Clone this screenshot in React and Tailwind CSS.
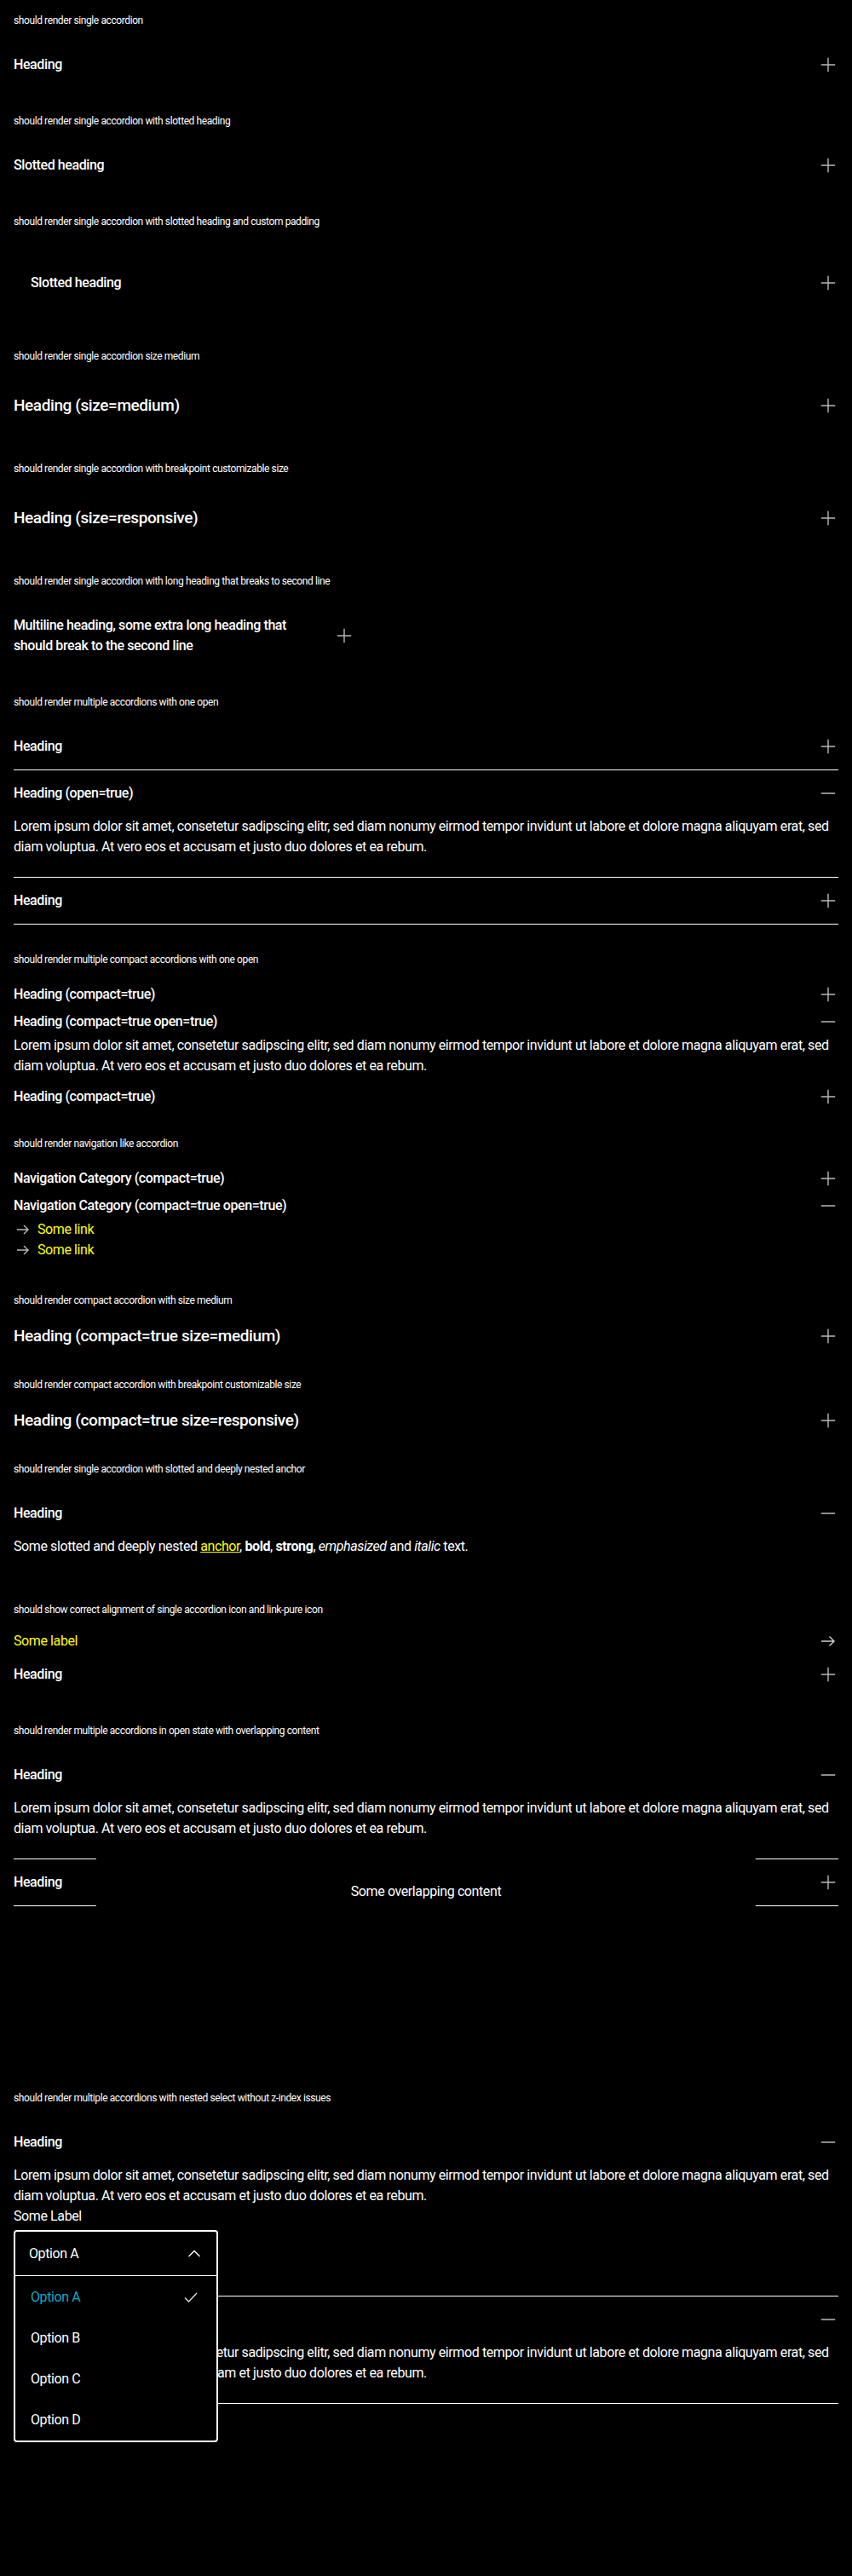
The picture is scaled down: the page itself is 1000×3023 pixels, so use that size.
import React from 'react'

const lorem =
    'Lorem ipsum dolor sit amet, consetetur sadipscing elitr, sed diam nonumy eirmod tempor invidunt ut labore et dolore magna aliquyam erat, sed diam voluptua. At vero eos et accusam et justo duo dolores et ea rebum.'

const Icon = ({ children, className = '' }) => (
    <svg
        viewBox="0 0 24 24"
        width="24"
        height="24"
        fill="none"
        stroke="currentColor"
        strokeWidth="1.4"
        strokeLinecap="square"
        className={`shrink-0 ${className}`}
    >
        {children}
    </svg>
)

const Plus = () => (
    <Icon className="text-[#b8b8b8]">
        <path d="M12 4.5v15M4.5 12h15" />
    </Icon>
)

const Minus = () => (
    <Icon className="text-[#c8c8c8]">
        <path d="M4.5 12h15" />
    </Icon>
)

const ArrowRight = () => (
    <Icon className="text-[#d0d0d0]">
        <path d="M4 12h15M13.5 6.5 19 12l-5.5 5.5" strokeLinecap="butt" />
    </Icon>
)

const SmallArrow = () => (
    <Icon className="text-[#b8b8b8]">
        <path d="M4 12h13M12 7l5 5-5 5" strokeLinecap="butt" />
    </Icon>
)

const ChevronUp = () => (
    <Icon>
        <path d="M5.5 15 12 8.5l6.5 6.5" strokeLinecap="butt" />
    </Icon>
)

const Check = () => (
    <Icon className="text-[#e0e0e0]">
        <path d="M5 12.5l4.5 4.5L19 7" strokeLinecap="butt" />
    </Icon>
)

// label above every story
const Section = ({ label, children, className = 'pb-[31px]' }) => (
    <div className={className}>
        <p className="text-[12px] leading-4">{label}</p>
        <div className="mt-[17px]">{children}</div>
    </div>
)

const Accordion = ({ heading, open, compact, medium, divider, padded, children }) => {
    let row = 'py-[15px]'
    let text = 'text-base leading-6'
    if (compact && medium) {
        row = 'pt-[3px] pb-[4px]'
        text = 'text-[19px] leading-7'
    } else if (compact) {
        row = 'py-1'
    } else if (medium) {
        row = 'pt-[19px] pb-[21px]'
        text = 'text-[19px] leading-7'
    }

    return (
        <div className={divider ? 'border-b border-white' : ''}>
            <div className={`flex items-center justify-between gap-4 ${row}`}>
                <h3 className={`font-medium ${text} ${padded ? 'p-5' : ''}`}>{heading}</h3>
                {open ? <Minus /> : <Plus />}
            </div>
            {open && <div className={compact ? 'pb-2' : 'pb-[23px]'}>{children}</div>}
        </div>
    )
}

const Body = ({ children }) => <p className="text-base leading-6">{children}</p>

export default function App() {
    return (
        <div className="min-h-[3023px] bg-black px-4 pt-4 text-white tracking-[-0.025em] font-['Roboto','Liberation_Sans',sans-serif]">
            <Section label="should render single accordion">
                <Accordion heading="Heading" />
            </Section>

            <Section label="should render single accordion with slotted heading">
                <Accordion heading="Slotted heading" />
            </Section>

            <Section label="should render single accordion with slotted heading and custom padding">
                <Accordion heading="Slotted heading" padded />
            </Section>

            <Section label="should render single accordion size medium">
                <Accordion heading="Heading (size=medium)" medium />
            </Section>

            <Section label="should render single accordion with breakpoint customizable size">
                <Accordion heading="Heading (size=responsive)" medium />
            </Section>

            <Section label="should render single accordion with long heading that breaks to second line">
                <div className="max-w-[400px]">
                    <Accordion heading="Multiline heading, some extra long heading that should break to the second line" />
                </div>
            </Section>

            <Section label="should render multiple accordions with one open" className="pb-[33px]">
                <Accordion heading="Heading" divider />
                <Accordion heading="Heading (open=true)" divider open>
                    <Body>{lorem}</Body>
                </Accordion>
                <Accordion heading="Heading" divider />
            </Section>

            <Section label="should render multiple compact accordions with one open">
                <Accordion heading="Heading (compact=true)" compact />
                <Accordion heading="Heading (compact=true open=true)" compact open>
                    <Body>{lorem}</Body>
                </Accordion>
                <Accordion heading="Heading (compact=true)" compact />
            </Section>

            <Section label="should render navigation like accordion">
                <Accordion heading="Navigation Category (compact=true)" compact />
                <Accordion heading="Navigation Category (compact=true open=true)" compact open>
                    <div className="flex flex-col">
                        <a href="#" className="flex h-6 items-center">
                            <SmallArrow />
                            <span className="ml-1 text-[#ffff00]">Some link</span>
                        </a>
                        <a href="#" className="flex h-6 items-center">
                            <SmallArrow />
                            <span className="ml-1 text-[#ffff00]">Some link</span>
                        </a>
                    </div>
                </Accordion>
            </Section>

            <Section label="should render compact accordion with size medium">
                <Accordion heading="Heading (compact=true size=medium)" compact medium />
            </Section>

            <Section label="should render compact accordion with breakpoint customizable size">
                <Accordion heading="Heading (compact=true size=responsive)" compact medium />
            </Section>

            <Section label="should render single accordion with slotted and deeply nested anchor">
                <Accordion heading="Heading" open>
                    <Body>
                        Some slotted and deeply nested{' '}
                        <a href="#" className="text-[#ffff00] underline">
                            anchor
                        </a>
                        , <b className="font-bold">bold</b>, <strong className="font-bold">strong</strong>,{' '}
                        <em>emphasized</em> and <i>italic</i> text.
                    </Body>
                </Accordion>
            </Section>

            <Section label="should show correct alignment of single accordion icon and link-pure icon">
                <a href="#" className="flex h-6 items-center justify-between text-[#ffff00]">
                    <span>Some label</span>
                    <ArrowRight />
                </a>
                <Accordion heading="Heading" />
            </Section>

            <Section
                label="should render multiple accordions in open state with overlapping content"
                className="pb-[217px]"
            >
                <div className="relative">
                    <Accordion heading="Heading" divider open>
                        <Body>{lorem}</Body>
                    </Accordion>
                    <Accordion heading="Heading" divider />
                    <div className="absolute left-1/2 top-[118px] flex h-[92px] w-4/5 -translate-x-1/2 items-center justify-center bg-black text-base">
                        Some overlapping content
                    </div>
                </div>
            </Section>

            <Section label="should render multiple accordions with nested select without z-index issues">
                <Accordion heading="Heading" divider open>
                    <Body>{lorem}</Body>
                    <label className="block text-base leading-6">Some Label</label>
                    <div className="relative z-10 mt-1 w-[240px]">
                        <div className="flex h-[54px] items-center justify-between rounded-t-[4px] border-2 border-b border-white pl-4 pr-[14px]">
                            <span>Option A</span>
                            <ChevronUp />
                        </div>
                        <ul className="absolute left-0 top-full w-full rounded-b-[4px] border-2 border-t-0 border-white bg-black pt-px">
                            <li className="flex h-12 items-center justify-between pl-[18px] pr-[18px] text-[#0fa9c6]">
                                <span>Option A</span>
                                <Check />
                            </li>
                            <li className="flex h-12 items-center pl-[18px]">Option B</li>
                            <li className="flex h-12 items-center pl-[18px]">Option C</li>
                            <li className="flex h-12 items-center pl-[18px]">Option D</li>
                        </ul>
                    </div>
                </Accordion>
                <Accordion heading="Heading" divider open>
                    <Body>{lorem}</Body>
                </Accordion>
            </Section>
        </div>
    )
}
